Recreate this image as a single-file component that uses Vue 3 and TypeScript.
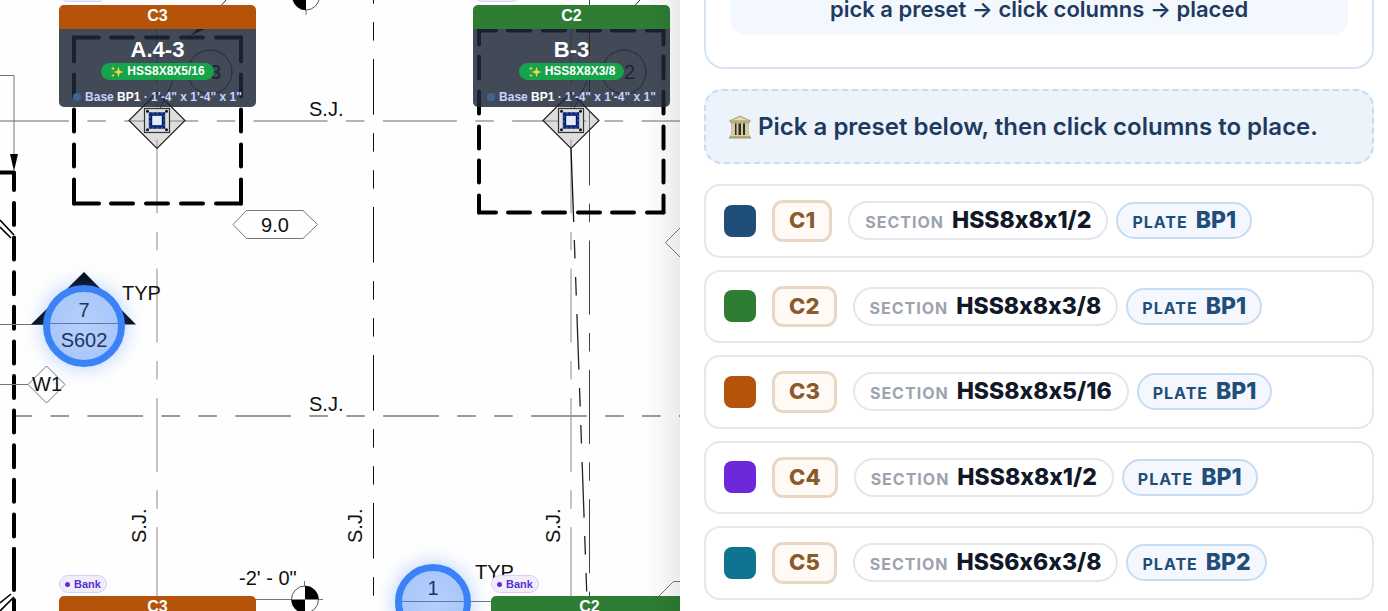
<script setup lang="ts">
import { ref } from 'vue'

interface Preset {
  id: string
  color: string
  section: string
  plate: string
}

interface ColumnTag {
  key: string
  mark: string
  grid: string
  section: string
  tone: 'rust' | 'green'
  place: string
}

const presets: Preset[] = [
  { id: 'C1', color: '#1f4e79', section: 'HSS8x8x1/2', plate: 'BP1' },
  { id: 'C2', color: '#2e7d32', section: 'HSS8x8x3/8', plate: 'BP1' },
  { id: 'C3', color: '#b45309', section: 'HSS8x8x5/16', plate: 'BP1' },
  { id: 'C4', color: '#6d28d9', section: 'HSS8x8x1/2', plate: 'BP1' },
  { id: 'C5', color: '#0e7490', section: 'HSS6x6x3/8', plate: 'BP2' },
]

const tags: ColumnTag[] = [
  { key: 'a3', mark: 'C3', grid: 'A.4-3', section: 'HSS8X8X5/16', tone: 'rust', place: 'at-a3' },
  { key: 'b3', mark: 'C2', grid: 'B-3', section: 'HSS8X8X3/8', tone: 'green', place: 'at-b3' },
  { key: 'a4', mark: 'C3', grid: 'A.4-4', section: 'HSS8X8X5/16', tone: 'rust', place: 'at-a4' },
  { key: 'b4', mark: 'C2', grid: 'B-4', section: 'HSS8X8X3/8', tone: 'green', place: 'at-b4' },
]

const columnX = [157, 571]
const selected = ref<string | null>(null)
</script>

<template>
  <div class="app">
    <section class="plan" aria-label="Foundation plan">
      <svg class="sheet" width="700" height="700" viewBox="0 0 700 700">
        <!-- grid lines -->
        <g fill="none" stroke-width="2">
          <path d="M157 10V596M571 10V596" stroke="#c4c4c4" stroke-dasharray="74 18.4 18.5 18.4" />
          <path d="M-5 121H700" stroke="#b4b4b4" stroke-dasharray="74 18.4 18.5 18.4" />
          <path d="M-60.500 416H700" stroke="#9a9a9a" stroke-dasharray="55.7 18.4 18.5 18.4 18.5 18.4" />
        </g>
        <path d="M373.500 -89V611" stroke="#111" stroke-dasharray="55.7 18.4 18.6 18.4 18.5 18.4" />
        <path d="M589.500 -18V611" stroke="#444" stroke-dasharray="74 18.4 18.5 18.4" />
        <path d="M571 148L573.700 222" stroke="#111" stroke-width="1.300" />
        <path d="M574.300 240L586.700 592" stroke="#222" stroke-width="1.300" stroke-dasharray="18.6 18.4 18.6 18.4 55.7 18.4" />

        <!-- footings -->
        <g fill="none" stroke="#000" stroke-width="4" stroke-linecap="round">
          <path d="M74 37.500H241M74 203.500H241" stroke-dasharray="25 12 22 13 22 13 22 13 25" />
          <path d="M74 37.500V203.500M241 37.500V203.500" stroke-dasharray="24 13 22 13 22 13 22 13 24" />
          <path d="M479 30.500H663.500M479 212.500H663.500" stroke-dasharray="17 12 22 13 22 13 22 12 22 13 17" />
          <path d="M479 30.500V212.500M663.500 30.500V212.500" stroke-dasharray="14 12 22 13 22 13 22 12 22 13 17" />
          <path d="M-4 172.500H14V190" stroke-linejoin="round" />
          <path d="M14 203V570" stroke-dasharray="22 12.6" />
          <path d="M14 549V590M14 600V640" />
        </g>
        <path d="M0 220L14 235M0 227L11 238M0 603L11 594M0 611L14 597" fill="none" stroke="#000" stroke-width="1.600" />
        <path d="M0 75.500H14V156" fill="none" stroke="#777" />
        <path d="M10 154H18L14 171Z" />

        <!-- note circles and leaders -->
        <g fill="none" stroke="#333">
          <circle cx="210" cy="72" r="22" />
          <circle cx="624" cy="72" r="22" />
          <path d="M173 81L157 115M587 81L571 115M226 0L200 30M640 0L620 22" />
        </g>
        <path d="M190 36L197 29H205Z" />
        <text class="note" x="210" y="79" text-anchor="middle">03</text>
        <text class="note" x="624" y="79" text-anchor="middle">02</text>

        <!-- columns on their base plates -->
        <g v-for="x in columnX" :key="x" :transform="`translate(${x} 120.5)`">
          <path d="M0 -28L28 0L0 28L-28 0Z" fill="#aaa" fill-opacity=".38" stroke="#222" stroke-width="1.200" />
          <rect x="-12.500" y="-12" width="25" height="24" fill="#ddd" stroke="#333" stroke-width="1.200" />
          <circle v-for="n in 4" :key="n" :cx="n % 2 ? -9.5 : 9.5" :cy="n > 2 ? 9.2 : -9.2" r="1.500" fill="#111" />
          <rect x="-6.500" y="-6.500" width="13" height="13" fill="#e6ecf6" stroke="#1a43a8" stroke-width="3.500" />
          <rect x="-5.500" y="-5.500" width="11" height="11" fill="none" stroke="#0d1c48" stroke-width="1" />
          <rect x="-7" y="-7" width="14" height="14" fill="none" stroke="#0d1c48" stroke-width="2" stroke-dasharray="1.500 3" />
        </g>

        <!-- elevation and wall symbols -->
        <g fill="none" stroke="#777">
          <path d="M233 224.500L246.500 210.500H303L317.500 224.500L303 238.500H246.500Z" />
          <path d="M680 228L665.500 242.500L680 257M658 597L673.500 581.500H700" />
          <path d="M28 384.500L46.500 366L65 384.500L46.500 403ZM0 384.500H28M0 324.500H43M470 601.500H492" />
          <path d="M255 599.500H323M304.500 581V616M306 -10V15" />
        </g>
        <g stroke="#555">
          <circle cx="305" cy="599.500" r="13.500" fill="#fff" />
          <circle cx="306" cy="-3.500" r="13.500" fill="#fff" />
        </g>
        <path d="M305 586A13.500 13.500 0 0 1 318.500 599.500H291.500A13.500 13.500 0 0 0 305 613ZM306 -3.500H292.500A13.500 13.500 0 0 0 306 10Z" />

        <g class="note">
          <text x="309" y="116">S.J.</text>
          <text x="309" y="411">S.J.</text>
          <text x="275" y="232" text-anchor="middle">9.0</text>
          <text x="122" y="300">TYP</text>
          <text x="475" y="579">TYP</text>
          <text x="47" y="391" text-anchor="middle">W1</text>
          <text x="239" y="585">-2' - 0"</text>
          <text transform="translate(146 543) rotate(-90)">S.J.</text>
          <text transform="translate(362 543) rotate(-90)">S.J.</text>
          <text transform="translate(560 543) rotate(-90)">S.J.</text>
        </g>
      </svg>

      <svg class="arrow" width="106" height="53" viewBox="0 0 106 53" aria-hidden="true">
        <path d="M53 0L105 52.500H0Z" fill="#050a14" />
      </svg>
      <div class="callout call-7"><span>7</span><span>S602</span></div>
      <div class="callout small call-1"><span>1</span><span>S602</span></div>

      <article v-for="tag in tags" :key="tag.key" class="tag" :class="tag.place">
        <span class="bank">Bank</span>
        <header class="tag-head" :class="tag.tone">{{ tag.mark }}</header>
        <div class="tag-body">
          <strong class="tag-grid">{{ tag.grid }}</strong>
          <span class="tag-section">
            <svg class="spark" width="14" height="14" viewBox="0 0 14 14" fill="#fcd34d" aria-hidden="true">
              <path d="M8.500 1.500L9.700 5.800L13.500 7L9.700 8.200L8.500 12.500L7.300 8.200L3.500 7L7.300 5.800Z" />
              <path d="M3 1L3.600 2.900L5.500 3.500L3.600 4.100L3 6L2.400 4.100L.5 3.500L2.400 2.900ZM3 8.500L3.500 10L5 10.500L3.500 11L3 12.500L2.500 11L1 10.500L2.500 10Z" />
            </svg>
            {{ tag.section }}
          </span>
          <span class="tag-base"><i class="dot"></i><span>Base <b>BP1</b> · 1'-4" x 1'-4" x 1"</span></span>
        </div>
      </article>
    </section>

    <aside class="panel">
      <div class="intro"><p class="intro-text">pick a preset → click columns → placed</p></div>
      <p class="hint">
        <svg class="temple" width="24" height="24" viewBox="0 0 24 24" aria-hidden="true">
          <path d="M3 8H21V21H3Z" fill="#cfc49c" />
          <path d="M5 8H19V20H5Z" fill="#2c2923" />
          <path d="M4 8H7V20H4ZM8.500 8H10.500V20H8.500ZM13 8H15V20H13ZM17 8H20V20H17Z" fill="#d4c9a0" />
          <path d="M12 .5L22.500 5.200V7L21 8.500H3L1.500 7V5.200Z" fill="#b5aa83" />
          <path d="M12 2L19.500 5.300H4.500Z" fill="#e6dcb8" />
          <path d="M2.500 20H21.500L23.500 23.500H.5Z" fill="#a89c72" />
          <path d="M2.500 20H21.500L22 21.200H2Z" fill="#ddd2aa" />
        </svg>
        Pick a preset below, then click columns to place.
      </p>
      <ul class="presets">
        <li v-for="p in presets" :key="p.id">
          <button class="preset" type="button" :aria-pressed="selected === p.id" @click="selected = p.id">
            <span class="swatch" :style="{ background: p.color }"></span>
            <span class="badge">{{ p.id }}</span>
            <span class="chips">
              <span class="chip"><small>SECTION</small><b>{{ p.section }}</b></span>
              <span class="chip plate"><small>PLATE</small><b>{{ p.plate }}</b></span>
            </span>
          </button>
        </li>
      </ul>
    </aside>
  </div>
</template>

<style>
body {
  margin: 0;
  background: #fff;
}
</style>

<style scoped>
.app {
  display: flex;
  height: 100vh;
  overflow: hidden;
  font-family: Inter, "Liberation Sans", sans-serif;
}

.plan {
  position: relative;
  flex: 0 0 49%;
  overflow: hidden;
  background: #fefefe;
  font-family: "Liberation Sans", Arial, sans-serif;
}
.plan::after {
  content: "";
  position: absolute;
  inset: 0 0 0 auto;
  width: 36px;
  background: linear-gradient(to right, rgba(0, 0, 0, 0), rgba(0, 0, 0, 0.03) 50%, rgba(0, 0, 0, 0.08));
}
.sheet {
  display: block;
}
.note {
  font-size: 20px;
  fill: #111;
}

.arrow {
  position: absolute;
  left: 31px;
  top: 272px;
}
.callout {
  position: absolute;
  box-sizing: border-box;
  display: flex;
  flex-direction: column;
  align-items: center;
  width: 82px;
  height: 82px;
  padding-top: 5px;
  border: 7px solid #3b82f6;
  border-radius: 50%;
  background: radial-gradient(#b7d0fb, #a3c3fa);
  box-shadow: 0 0 20px rgba(59, 130, 246, 0.4);
  color: #1f3560;
  font-size: 20px;
  line-height: 26px;
}
.callout span:first-child {
  align-self: stretch;
  border-bottom: 1px solid #6179a6;
  text-align: center;
}
.callout span:last-child {
  padding-top: 3px;
}
.callout.small {
  width: 76px;
  height: 76px;
  padding-top: 4px;
}
.call-7 {
  left: 43px;
  top: 285px;
}
.call-1 {
  left: 395px;
  top: 564px;
}

.tag {
  position: absolute;
  width: 197px;
  color: #fff;
  font-weight: 700;
}
.at-a3 { left: 59px; top: 5px; }
.at-b3 { left: 473px; top: 5px; }
.at-a4 { left: 59px; top: 596px; }
.at-b4 { left: 491px; top: 596px; }

.bank {
  position: absolute;
  left: 0;
  bottom: 100%;
  margin-bottom: 3px;
  display: flex;
  align-items: center;
  gap: 4px;
  padding: 0 5px;
  border: 1px solid #d9d0f6;
  border-radius: 9px;
  background: #f1edfd;
  color: #5b32cc;
  font-size: 11px;
  line-height: 16px;
}
.bank::before {
  content: "";
  width: 5px;
  height: 5px;
  border-radius: 50%;
  background: currentColor;
}
.tag-head {
  border-radius: 5px 5px 0 0;
  font-size: 16px;
  line-height: 22px;
  padding-bottom: 2px;
  text-align: center;
}
.rust { background: #b45309; }
.green { background: #2e7d32; }
.tag-body {
  display: flex;
  flex-direction: column;
  align-items: center;
  padding: 8px 0 2px;
  border-radius: 0 0 5px 5px;
  background: rgba(30, 39, 56, 0.84);
}
.tag-grid {
  font-size: 22px;
  line-height: 26px;
}
.tag-section {
  display: flex;
  align-items: center;
  gap: 3px;
  padding: 0 9px;
  border-radius: 9px;
  background: #16a34a;
  font-size: 12px;
  line-height: 17px;
}
.tag-base {
  display: flex;
  align-items: center;
  gap: 4px;
  margin-top: 9px;
  color: #c7d2fe;
  font-size: 12px;
  line-height: 16px;
  white-space: nowrap;
}
.tag-base b { color: #fff; }
.dot {
  width: 8px;
  height: 8px;
  border-radius: 50%;
  background: #41658e;
}

.panel {
  flex: 1;
  min-width: 0;
  padding: 0 14px 12px 24px;
  background: #fff;
}
.intro {
  padding: 0 24px 32px;
  border: 2px solid #d6e4f2;
  border-top: 0;
  border-radius: 0 0 20px 20px;
}
.intro-text {
  margin: 0;
  padding-bottom: 16px;
  border-radius: 0 0 16px 16px;
  background: #f3f8fe;
  color: #1e3a5f;
  font-size: 22px;
  font-weight: 600;
  line-height: 19px;
  text-align: center;
}
.hint {
  display: flex;
  align-items: center;
  gap: 6px;
  margin: 20px 0;
  padding: 21px 22px;
  border: 2px dashed #c5dcf3;
  border-radius: 18px;
  background: #ecf3fb;
  color: #1e3a5f;
  font-size: 24px;
  font-weight: 600;
  line-height: 29px;
}
.presets {
  display: grid;
  gap: 12px;
  margin: 0;
  padding: 0;
  list-style: none;
}
.preset {
  display: flex;
  align-items: center;
  gap: 16px;
  width: 100%;
  padding: 14px 18px;
  border: 2px solid #e5e7eb;
  border-radius: 16px;
  background: #fff;
  font: inherit;
  font-variant-ligatures: no-contextual;
  text-align: left;
  cursor: pointer;
}
.swatch {
  width: 32px;
  height: 32px;
  border-radius: 8px;
}
.badge {
  padding: 4px 14px;
  border: 3px solid #e8d8c3;
  border-radius: 11px;
  background: #fffaf6;
  color: #8b5a2b;
  font-size: 22px;
  font-weight: 800;
  line-height: 1.25;
}
.chips {
  display: flex;
  align-items: center;
  gap: 8px;
}
.chip {
  display: flex;
  align-items: baseline;
  gap: 8px;
  padding: 3px 15px;
  border: 2px solid #e5e7eb;
  border-radius: 20px;
  background: #fff;
  color: #111827;
  font-size: 23px;
  line-height: 29px;
}
.chip small {
  color: #9ca3af;
  font-size: 16px;
  font-weight: 700;
  letter-spacing: 1px;
  line-height: 16px;
}
.chip b { font-weight: 800; }
.chip.plate {
  padding: 2px 14px;
  border-color: #c5dcf3;
  background: #f4f8fe;
  color: #1f4e79;
}
.chip.plate small { color: #1f4e79; }
</style>
